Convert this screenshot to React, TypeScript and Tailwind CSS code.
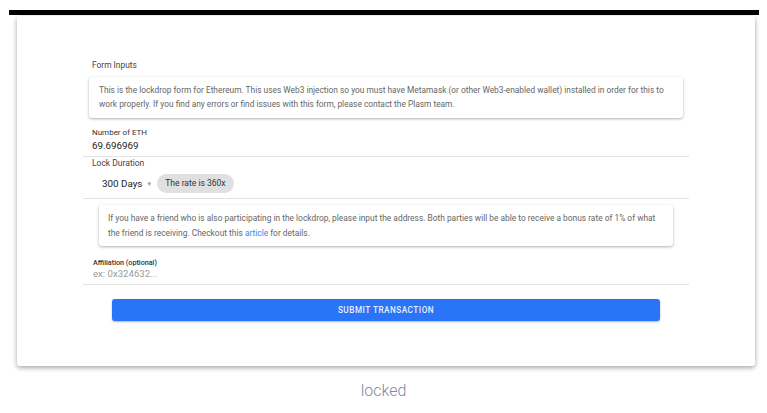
const font = { fontFamily: "Roboto, 'Liberation Sans', sans-serif" };

export default function App() {
  return (
    <div className="w-[767px] h-[413px] bg-white overflow-hidden" style={font}>
      <div className="ml-[9px] mt-[10px] h-[5px] w-[750px] bg-black" />
      <div className="ml-[17px] mt-px w-[738px] h-[350px] bg-white rounded-[3px] shadow-[0_2px_4px_rgba(0,0,0,0.25),0_1px_6px_rgba(0,0,0,0.12)] px-[66px] pt-[43px]">
        <div className="pl-[9px] text-[8.4px] leading-[12px] text-[#444]">Form Inputs</div>
        <div className="mx-[6px] mt-[6px] h-[41px] rounded-[3px] bg-white shadow-[0_1px_3px_rgba(0,0,0,0.3)] pl-[10px] pr-[6px] pt-[6px] text-[8.35px] leading-[14px] text-[#666]">
          This is the lockdrop form for Ethereum. This uses Web3 injection so you must have Metamask (or other Web3-enabled wallet) installed in order for this to work properly. If you find any errors or find issues with this form, please contact the Plasm team.
        </div>
        <div className="mt-[10px] pl-[9px] border-b border-[#e3e3e3] h-[29px]">
          <div className="text-[8px] leading-[10px] text-[#333]">Number of ETH</div>
          <div className="mt-[1px] text-[9.8px] leading-[14px] text-[#222]">69.696969</div>
        </div>
        <div className="pl-[9px] border-b border-[#e3e3e3] h-[42px]">
          <div className="text-[8.5px] leading-[12px] text-[#444]">Lock Duration</div>
          <div className="mt-[5px] flex items-center pl-[10px]">
            <span className="text-[9.8px] leading-[19px] text-[#222]">300 Days</span>
            <span className="ml-[4px] text-[6px] text-[#999]">▼</span>
            <span className="ml-[5px] h-[19px] rounded-full bg-[#e0e0e0] px-[8px] text-[8.5px] leading-[19px] text-[#333]">
              The rate is 360x
            </span>
          </div>
        </div>
        <div className="ml-[16px] mr-[16px] mt-[6px] h-[41px] rounded-[3px] bg-white shadow-[0_1px_3px_rgba(0,0,0,0.3)] px-[9px] pt-[6px] text-[8.4px] leading-[15px] text-[#666]">
          If you have a friend who is also participating in the lockdrop, please input the address. Both parties will be able to receive a bonus rate of 1% of what the friend is receiving. Checkout this <a className="text-[#3b82f6]">article</a> for details.
        </div>
        <div className="mt-[12px] pl-[10px] border-b border-[#e3e3e3] h-[27px]">
          <div className="text-[7.2px] leading-[9px] text-[#333] font-medium">Affiliation (optional)</div>
          <div className="text-[9.6px] leading-[14px] text-[#9a9a9a]">ex: 0x324632...</div>
        </div>
        <div className="mx-[29px] mt-[14px] h-[22px] rounded-[3px] bg-[#2a74f7] shadow-[0_1px_2px_rgba(0,0,0,0.3)] flex items-center justify-center text-[8.2px] font-medium tracking-[0.5px] text-[#e8efff]">
          SUBMIT TRANSACTION
        </div>
      </div>
      <div className="mt-[14px] text-center text-[16px] leading-[22px] font-light text-[#7f8aa0]">locked</div>
    </div>
  );
}
